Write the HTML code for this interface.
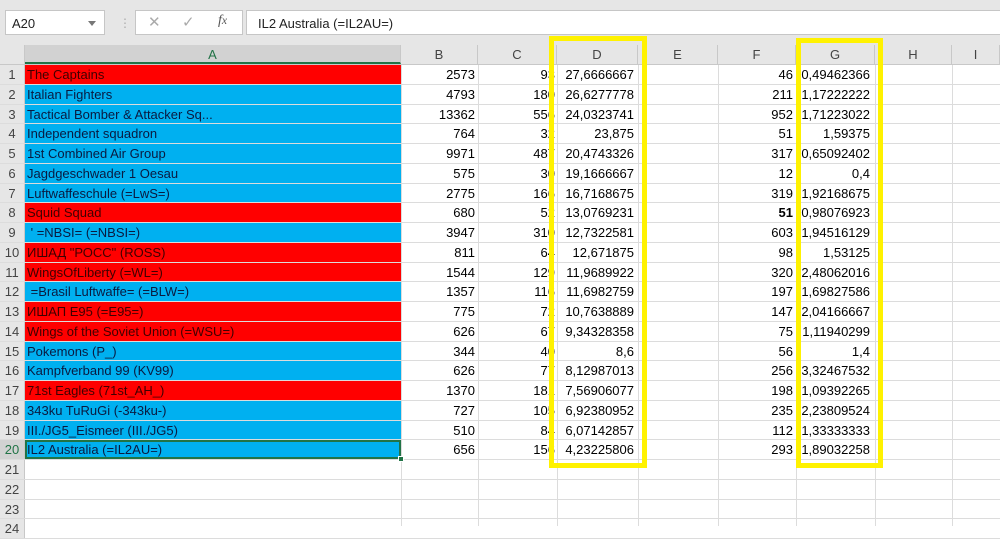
<!DOCTYPE html>
<html><head><meta charset="utf-8"><style>
*{margin:0;padding:0;box-sizing:border-box}
body{width:1000px;height:526px;overflow:hidden;background:#fff;font-family:"Liberation Sans",Arial,sans-serif;font-size:13px;color:#000;position:relative}
.top{position:absolute;left:0;top:0;width:1000px;height:45px;background:#e6e6e6}
.nb{position:absolute;left:5px;top:10px;width:100px;height:25px;background:#fff;border:1px solid #c6c6c6;font-size:13px;padding:5px 6px;color:#222}
.nb:after{content:"";position:absolute;right:8px;top:10px;border:4px solid transparent;border-top:5px solid #777}
.fxb{position:absolute;left:135px;top:10px;width:108px;height:25px;background:#fff;border:1px solid #c6c6c6;color:#aaa;font-size:15px}
.fi{position:absolute;left:246px;top:10px;width:760px;height:25px;background:#fff;border:1px solid #c6c6c6;padding:5px 11px;color:#222}
.hdr{position:absolute;left:0;top:45px;width:1000px;height:20px;background:#e6e6e6;border-bottom:1px solid #c8c8c8}
.hdr div{position:absolute;top:0;height:19px;text-align:center;line-height:19px;color:#444;border-right:1px solid #c8c8c8}
.rows{position:absolute;left:0;top:65px;width:1000px}
.r{position:relative;height:19.75px;border-bottom:1px solid #dcdcdc}
.r div{position:absolute;top:0;height:100%;line-height:19px;white-space:nowrap;overflow:hidden}
.n{left:0;width:25px;background:#e6e6e6;color:#444;text-align:center;border-right:1px solid #c8c8c8}
.a{left:25px;width:376px;padding-left:2px;color:#0a1a40}
.R .a{background:#ff0000;color:#400000}
.B .a{background:#00b0f0}
.b{left:401px;width:74px;text-align:right}
.c{left:478px;width:77px;text-align:right}
.d{left:557px;width:77px;text-align:right}
.f{left:718px;width:75px;text-align:right}
.g{left:796px;width:74px;text-align:right}
.vl{position:absolute;top:65px;height:461px;width:1px;background:#dcdcdc}
.y{position:absolute;border:5px solid #fff200}
</style></head><body>
<div class="top">
<div class="nb">A20</div>
<div style="position:absolute;left:119px;top:16px;color:#aaa;font-size:12px">⋮</div>
<div class="fxb"><span style="position:absolute;left:12px;top:2px">✕</span><span style="position:absolute;left:46px;top:2px">✓</span><span style="position:absolute;left:82px;top:2px;color:#555;font-family:'Liberation Serif',serif;font-style:italic;font-size:14px">f<small>x</small></span></div>
<div class="fi">IL2 Australia (=IL2AU=)</div>
</div>
<div class="hdr">
<div style="left:0;width:25px"></div>
<div style="left:25px;width:376px;background:#d2d2d2;color:#217346;border-bottom:2px solid #217346">A</div>
<div style="left:401px;width:77px">B</div>
<div style="left:478px;width:79px">C</div>
<div style="left:557px;width:81px">D</div>
<div style="left:638px;width:80px">E</div>
<div style="left:718px;width:78px">F</div>
<div style="left:796px;width:79px">G</div>
<div style="left:875px;width:77px">H</div>
<div style="left:952px;width:48px">I</div>
</div>
<div class="vl" style="left:401px"></div><div class="vl" style="left:478px"></div><div class="vl" style="left:557px"></div><div class="vl" style="left:638px"></div><div class="vl" style="left:718px"></div><div class="vl" style="left:796px"></div><div class="vl" style="left:875px"></div><div class="vl" style="left:952px"></div>
<div class="rows">
<div class="r R"><div class="n">1</div><div class="a">The Captains</div><div class="b">2573</div><div class="c">93</div><div class="d">27,6666667</div><div class="f">46</div><div class="g">0,49462366</div></div>
<div class="r B"><div class="n">2</div><div class="a">Italian Fighters</div><div class="b">4793</div><div class="c">180</div><div class="d">26,6277778</div><div class="f">211</div><div class="g">1,17222222</div></div>
<div class="r B"><div class="n">3</div><div class="a">Tactical Bomber &amp; Attacker Sq...</div><div class="b">13362</div><div class="c">556</div><div class="d">24,0323741</div><div class="f">952</div><div class="g">1,71223022</div></div>
<div class="r B"><div class="n">4</div><div class="a">Independent squadron</div><div class="b">764</div><div class="c">32</div><div class="d">23,875</div><div class="f">51</div><div class="g">1,59375</div></div>
<div class="r B"><div class="n">5</div><div class="a">1st Combined Air Group</div><div class="b">9971</div><div class="c">487</div><div class="d">20,4743326</div><div class="f">317</div><div class="g">0,65092402</div></div>
<div class="r B"><div class="n">6</div><div class="a">Jagdgeschwader 1 Oesau</div><div class="b">575</div><div class="c">30</div><div class="d">19,1666667</div><div class="f">12</div><div class="g">0,4</div></div>
<div class="r B"><div class="n">7</div><div class="a">Luftwaffeschule (=LwS=)</div><div class="b">2775</div><div class="c">166</div><div class="d">16,7168675</div><div class="f">319</div><div class="g">1,92168675</div></div>
<div class="r R"><div class="n">8</div><div class="a">Squid Squad</div><div class="b">680</div><div class="c">52</div><div class="d">13,0769231</div><div class="f"><b>51</b></div><div class="g">0,98076923</div></div>
<div class="r B"><div class="n">9</div><div class="a">&nbsp;' =NBSI= (=NBSI=)</div><div class="b">3947</div><div class="c">310</div><div class="d">12,7322581</div><div class="f">603</div><div class="g">1,94516129</div></div>
<div class="r R"><div class="n">10</div><div class="a">ИШАД "РОСС" (ROSS)</div><div class="b">811</div><div class="c">64</div><div class="d">12,671875</div><div class="f">98</div><div class="g">1,53125</div></div>
<div class="r R"><div class="n">11</div><div class="a">WingsOfLiberty (=WL=)</div><div class="b">1544</div><div class="c">129</div><div class="d">11,9689922</div><div class="f">320</div><div class="g">2,48062016</div></div>
<div class="r B"><div class="n">12</div><div class="a">&nbsp;=Brasil Luftwaffe= (=BLW=)</div><div class="b">1357</div><div class="c">116</div><div class="d">11,6982759</div><div class="f">197</div><div class="g">1,69827586</div></div>
<div class="r R"><div class="n">13</div><div class="a">ИШАП E95 (=E95=)</div><div class="b">775</div><div class="c">72</div><div class="d">10,7638889</div><div class="f">147</div><div class="g">2,04166667</div></div>
<div class="r R"><div class="n">14</div><div class="a">Wings of the Soviet Union (=WSU=)</div><div class="b">626</div><div class="c">67</div><div class="d">9,34328358</div><div class="f">75</div><div class="g">1,11940299</div></div>
<div class="r B"><div class="n">15</div><div class="a">Pokemons (P_)</div><div class="b">344</div><div class="c">40</div><div class="d">8,6</div><div class="f">56</div><div class="g">1,4</div></div>
<div class="r B"><div class="n">16</div><div class="a">Kampfverband 99 (KV99)</div><div class="b">626</div><div class="c">77</div><div class="d">8,12987013</div><div class="f">256</div><div class="g">3,32467532</div></div>
<div class="r R"><div class="n">17</div><div class="a">71st Eagles (71st_AH_)</div><div class="b">1370</div><div class="c">181</div><div class="d">7,56906077</div><div class="f">198</div><div class="g">1,09392265</div></div>
<div class="r B"><div class="n">18</div><div class="a">343ku TuRuGi (-343ku-)</div><div class="b">727</div><div class="c">105</div><div class="d">6,92380952</div><div class="f">235</div><div class="g">2,23809524</div></div>
<div class="r B"><div class="n">19</div><div class="a">III./JG5_Eismeer (III./JG5)</div><div class="b">510</div><div class="c">84</div><div class="d">6,07142857</div><div class="f">112</div><div class="g">1,33333333</div></div>
<div class="r B"><div class="n" style="color:#217346;background:#d2d2d2">20</div><div class="a" style="box-shadow:inset 0 0 0 2px #217346">IL2 Australia (=IL2AU=)</div><div class="b">656</div><div class="c">156</div><div class="d">4,23225806</div><div class="f">293</div><div class="g">1,89032258</div></div>
<div class="r"><div class="n">21</div></div>
<div class="r"><div class="n">22</div></div>
<div class="r"><div class="n">23</div></div>
<div class="r"><div class="n">24</div></div>
</div>
<div style="position:absolute;left:398px;top:456px;width:6px;height:6px;background:#217346;border:1px solid #fff"></div>
<div class="y" style="left:549px;top:36px;width:98px;height:432px"></div>
<div class="y" style="left:796px;top:38px;width:87px;height:430px"></div>
</body></html>
